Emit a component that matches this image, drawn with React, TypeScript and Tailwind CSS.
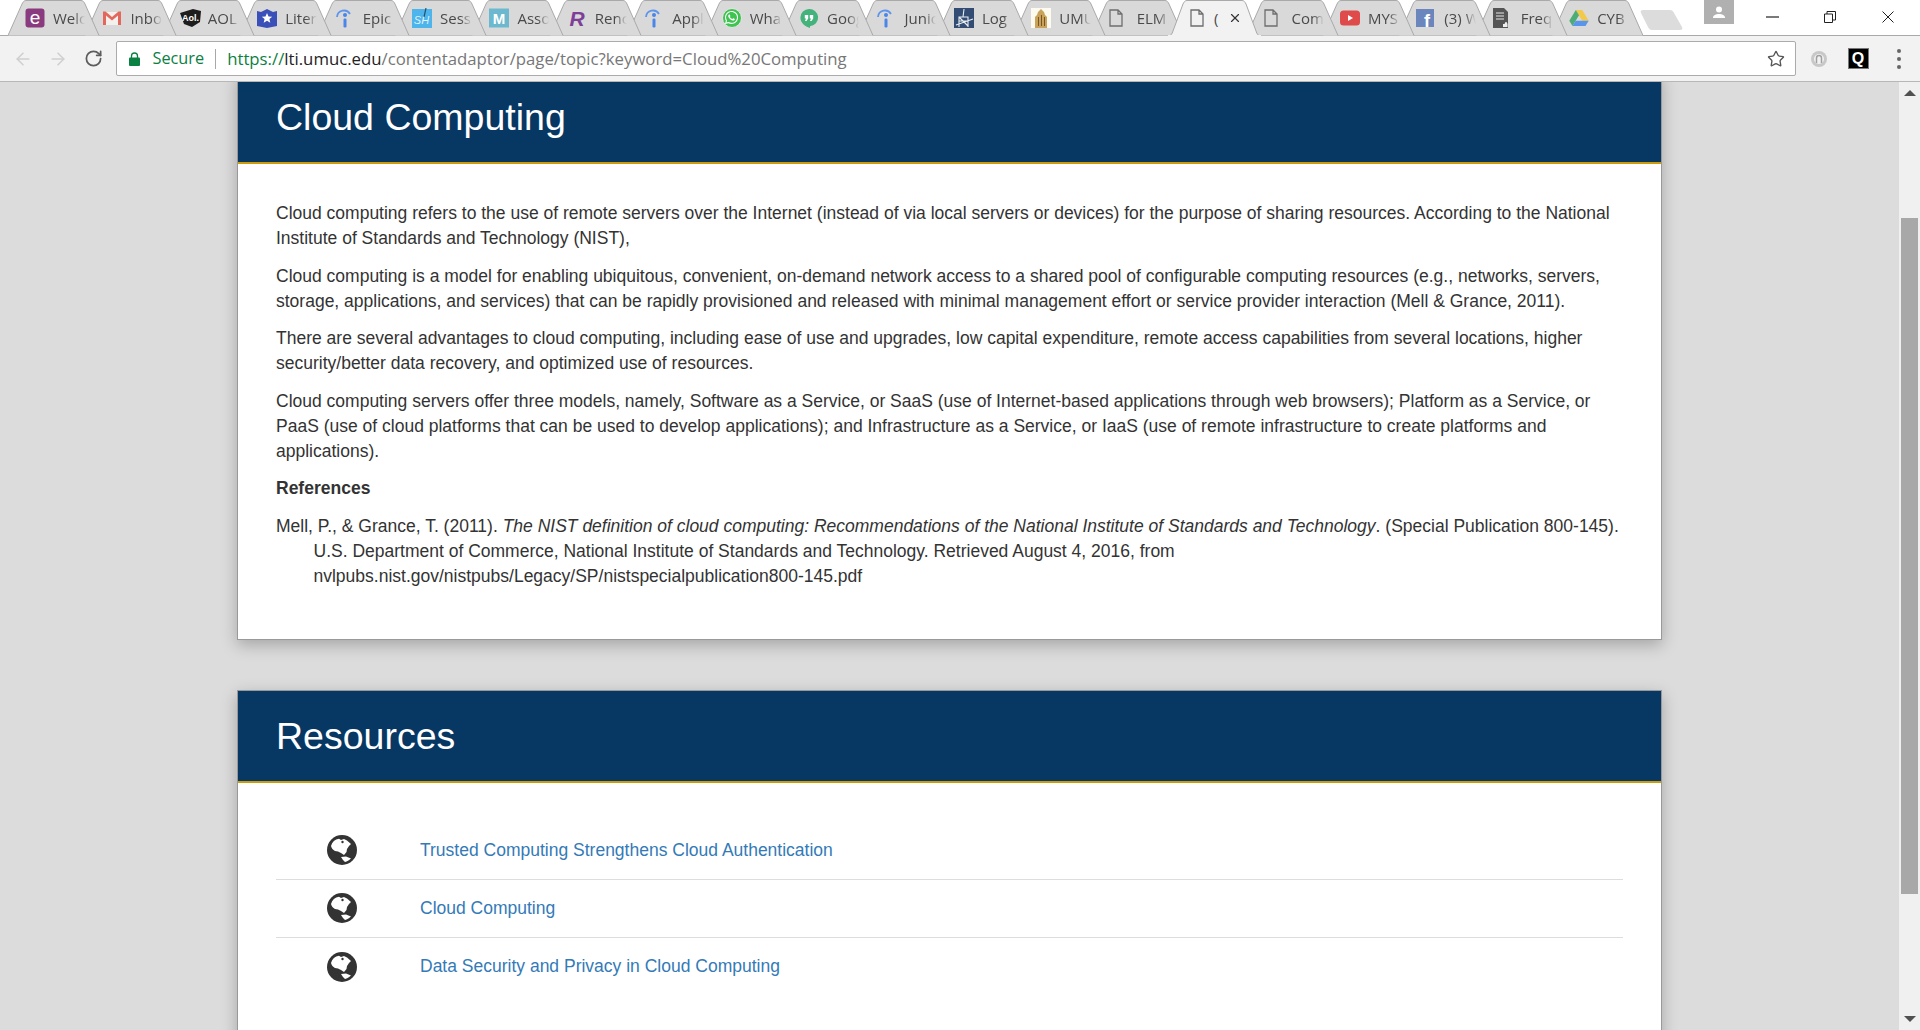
import { ArrowLeft, ArrowRight, RotateCw, Star, X } from "lucide-react";
import { FaWhatsapp } from "react-icons/fa";

const tabs = [
  { icon: "elms", title: "Welcome" },
  { icon: "gmail", title: "Inbox" },
  { icon: "aol", title: "AOL" },
  { icon: "shield", title: "Literature" },
  { icon: "info", title: "Epic" },
  { icon: "sh", title: "Session" },
  { icon: "assoc", title: "Assoc" },
  { icon: "r", title: "Rencontre" },
  { icon: "info", title: "Apply" },
  { icon: "whatsapp", title: "WhatsApp" },
  { icon: "hangouts", title: "Google" },
  { icon: "info", title: "Junior" },
  { icon: "log", title: "Log" },
  { icon: "umuc", title: "UMUC" },
  { icon: "doc", title: "ELM" },
  { icon: "doc", title: "Cloud", active: true },
  { icon: "doc", title: "Comp" },
  { icon: "youtube", title: "MYS", tight: true },
  { icon: "facebook", title: "(3) W", tight: true },
  { icon: "freq", title: "Freq", tight: true },
  { icon: "drive", title: "CYB", tight: true },
];

const resources = [
  "Trusted Computing Strengthens Cloud Authentication",
  "Cloud Computing",
  "Data Security and Privacy in Cloud Computing",
];

function Favicon({ name }: { name: string }) {
  if (name === "elms")
    return (
      <svg width="20" height="20" viewBox="0 0 20 20">
        <rect x="0.5" y="0.5" width="19" height="19" rx="3" fill="#8a3a7e" />
        <text x="10" y="16" textAnchor="middle" fontSize="19" fill="#fff" fontFamily="Liberation Sans">e</text>
      </svg>
    );
  if (name === "gmail")
    return (
      <svg width="20" height="20" viewBox="0 0 20 20">
        <path d="M1 4h18v13H1z" fill="#f4f0ee" />
        <path d="M1 17V3.5h2.5L10 9l6.5-5.5H19V17h-3V7.5L10 12.5 4 7.5V17z" fill="#e2685c" />
      </svg>
    );
  if (name === "aol")
    return (
      <svg width="21" height="20" viewBox="0 0 21 20">
        <path d="M0 5l13-4 8 2-1 11-8 5-8-3z" fill="#1d1d1d" />
        <text x="10.5" y="13" textAnchor="middle" fontSize="9" fontWeight="700" fill="#fff" fontFamily="Liberation Sans">Aol.</text>
      </svg>
    );
  if (name === "shield")
    return (
      <svg width="20" height="20" viewBox="0 0 20 20">
        <path d="M0 3l4 1 6-3 6 3 4-1v15l-10 2-10-2z" fill="#3a50b8" />
        <path d="M10 5l1.5 3.4 3.7.3-2.8 2.4.9 3.6L10 12.8l-3.3 1.9.9-3.6-2.8-2.4 3.7-.3z" fill="#fff" />
      </svg>
    );
  if (name === "info")
    return (
      <svg width="18" height="20" viewBox="0 0 18 20">
        <path d="M2 9a7 7 0 0 1 13-3" fill="none" stroke="#5f94ee" strokeWidth="1.8" />
        <circle cx="10" cy="7" r="2" fill="#4a86e8" />
        <rect x="8.5" y="10.5" width="3" height="9" rx="1.2" fill="#4a86e8" />
      </svg>
    );
  if (name === "sh")
    return (
      <svg width="20" height="20" viewBox="0 0 20 20">
        <rect y="1" width="20" height="19" fill="#4db4ec" />
        <text x="9.5" y="16" textAnchor="middle" fontSize="11" fontStyle="italic" fill="#dff3fc" fontFamily="Liberation Sans">SH</text>
        <path d="M14 0l-2 9" stroke="#27506b" strokeWidth="1.2" />
      </svg>
    );
  if (name === "assoc")
    return (
      <svg width="20" height="20" viewBox="0 0 20 20">
        <rect y="0.5" width="20" height="19" fill="#6cb9cf" />
        <text x="10" y="16" textAnchor="middle" fontSize="15" fontWeight="700" fill="#fff" fontFamily="Liberation Sans">M</text>
      </svg>
    );
  if (name === "r")
    return (
      <svg width="20" height="20" viewBox="0 0 20 20">
        <text x="10" y="18" textAnchor="middle" fontSize="21" fontWeight="700" fontStyle="italic" fill="#7d3f98" fontFamily="Liberation Sans">R</text>
      </svg>
    );
  if (name === "whatsapp")
    return (
      <div className="flex size-5 items-center justify-center rounded-full border border-[#e6e6e6] bg-[#3fc351] text-white">
        <FaWhatsapp size={15} />
      </div>
    );
  if (name === "hangouts")
    return (
      <svg width="20" height="20" viewBox="0 0 20 20">
        <path d="M10 1a8.6 8.6 0 0 1 1 17.2V20c-5-1.500-9.600-5-9.600-10.400A8.600 8.600 0 0 1 10 1z" fill="#44b27b" />
        <path d="M5.800 7h3.400v3.400L7.500 13H6l1-2.600H5.800zM10.800 7h3.400v3.400L12.500 13H11l1-2.600h-1.200z" fill="#fff" />
      </svg>
    );
  if (name === "log")
    return (
      <svg width="20" height="20" viewBox="0 0 20 20">
        <rect width="20" height="20" fill="#334c74" />
        <path d="M5 19V9h9v10M5 13h9M9 9l1-8M2 17l17-6M5 9l9 9" fill="none" stroke="#e8edf3" strokeWidth="1.100" />
      </svg>
    );
  if (name === "umuc")
    return (
      <svg width="20" height="20" viewBox="0 0 20 20">
        <rect width="20" height="20" fill="#fdfaf0" />
        <path d="M4 20V9l2-2 1-3 3-3 3 3 1 3 2 2v11z" fill="#c9a35a" />
        <path d="M7 9h1v9H7zM10 7h1v11h-1zM13 9h1v9h-1z" fill="#76552a" />
      </svg>
    );
  if (name === "doc")
    return (
      <svg width="14" height="18" viewBox="0 0 14 18">
        <path d="M1 1h8l4 4v12H1z M9 1v4h4" fill="none" stroke="#6e6e6e" strokeWidth="1.300" />
      </svg>
    );
  if (name === "youtube")
    return (
      <svg width="20" height="20" viewBox="0 0 20 20">
        <rect y="2.500" width="20" height="15" rx="3.500" fill="#df4a4a" />
        <path d="M8 7l5 3-5 3z" fill="#fff" />
      </svg>
    );
  if (name === "facebook")
    return (
      <svg width="18" height="18" viewBox="0 0 18 18">
        <rect width="18" height="18" fill="#6a86bd" />
        <text x="11" y="18" textAnchor="middle" fontSize="18" fontWeight="700" fill="#fff" fontFamily="Liberation Sans">f</text>
      </svg>
    );
  if (name === "freq")
    return (
      <svg width="16" height="20" viewBox="0 0 16 20">
        <path d="M0 0h11l4 4v16H0z" fill="#555" />
        <path d="M3 5h8M3 8h8M3 11h8" stroke="#e6e6e6" strokeWidth="1.100" />
        <path d="M10 19v-3h1.500l1-2h1l1 2v3z" fill="#eee" />
      </svg>
    );
  return (
    <svg width="20" height="18" viewBox="0 0 20 18">
      <path d="M6.800 1h6.400l6.500 10.800h-6.500z" fill="#f2c94a" />
      <path d="M6.800 1L0.300 11.800 3.500 17l6.500-10.800z" fill="#4cae76" />
      <path d="M3.500 17h13l3.200-5.200H6.700z" fill="#5a95ec" />
    </svg>
  );
}

function Globe() {
  return (
    <svg width="30" height="30" viewBox="0 0 30 30" className="ml-[51px] shrink-0">
      <circle cx="15" cy="15" r="15" fill="#333" />
      <path
        d="M4 11C5 7 8 4.500 12 3.800L14 5l3-1 3 1.500L24 9l-2 2-2 3-.5 3-2.500 3-3-2-3-1.500L8 16c-2-1-3.500-3-4-5z"
        fill="#fff"
      />
      <circle cx="15.500" cy="7" r="1.200" fill="#333" />
      <path d="M14 22l5-.5 5 2c-2 2-4 3-6 3.500l-2-2z" fill="#fff" />
    </svg>
  );
}

function Tab({ icon, title, active, tight, index }: { icon: string; title: string; active?: boolean; tight?: boolean; index: number }) {
  return (
    <div
      className={`relative flex h-[36px] w-[93px] shrink-0 items-center pb-[1px] first:ml-0 ${tight ? "-ml-[16.6px]" : "-ml-[15.6px]"} ${active ? "z-40" : ""}`}
      style={active ? undefined : { zIndex: 30 - index }}
    >
      <svg className="absolute inset-0" width="93" height="36" viewBox="0 0 93 36">
        <path
          d={active ? "M0 36c3 0 4-2 5-5L15 4c1-2 2-3.500 4-3.500h55c2 0 3 1.500 4 3.500l10 27c1 3 2 5 5 5z" : "M1 35.500L15 4c1-2 2-3.500 4-3.500h55c2 0 3 1.500 4 3.500l14 31.500"}
          fill={active ? "#f2f2f2" : "#d9d9d9"}
          stroke="#a9a9a9"
        />
        {active && <path d="M0 36h93" stroke="#f2f2f2" strokeWidth="2" />}
      </svg>
      <div className="relative flex h-[35px] w-full items-center pl-[18px]">
        <div className={`flex shrink-0 items-center justify-start ${active ? "ml-[4px] w-[24px]" : "w-[28px]"}`}>
          <Favicon name={icon} />
        </div>
        <div
          className={`overflow-hidden whitespace-nowrap text-[15px] leading-5 text-[#4a4a4a] [font-family:'Open_Sans',sans-serif] ${active ? "w-[7px]" : "w-[32px] [mask-image:linear-gradient(to_right,black_65%,transparent)]"}`}
        >
          {active ? "(" : title}
        </div>
        {active && <X size={14} strokeWidth={2} className="ml-[7px] text-[#333]" />}
      </div>
    </div>
  );
}

function TabStrip() {
  return (
    <div className="flex h-[36px] shrink-0 items-start border-b border-[#a9a9a9] bg-white pl-[7px]">
      <div className="isolate flex h-[36px]">
        {tabs.map((t, i) => (
          <Tab key={t.title} icon={t.icon} title={t.title} active={t.active} tight={t.tight} index={i} />
        ))}
      </div>
      <svg className="-ml-[4px] mt-[9px] shrink-0" width="43" height="22" viewBox="0 0 43 22">
        <path d="M3 1h27c2 0 3 1 4 3l8 14c1 2 0 3-2 3H12c-2 0-3-1-4-3L1 4C0 2 1 1 3 1z" fill="#dcdcdc" />
      </svg>
      <div className="ml-[21px] flex h-[24px] w-[30px] shrink-0 items-center justify-center bg-[#b0b0b0]">
        <svg width="12" height="13" viewBox="0 0 12 13">
          <circle cx="6" cy="3.500" r="3" fill="#fff" />
          <path d="M0 12c0-3 3-4 6-4s6 1 6 4z" fill="#fff" />
        </svg>
      </div>
      <div className="ml-[31px] mt-[11px] flex w-[129px] shrink-0 items-start justify-between">
        <svg width="15" height="12" viewBox="0 0 15 12">
          <path d="M1 6h13" stroke="#222" strokeWidth="1.200" />
        </svg>
        <svg width="12" height="12" viewBox="0 0 12 12" className="-ml-[3px]">
          <path d="M.5 3h8v8.500h-8zM3 3V.5h8.500V9H8.500" fill="none" stroke="#222" />
        </svg>
        <svg width="12" height="12" viewBox="0 0 12 12">
          <path d="M.5.500l11 11M11.500.500l-11 11" stroke="#222" />
        </svg>
      </div>
    </div>
  );
}

function Toolbar() {
  return (
    <div className="flex h-[46px] shrink-0 items-center border-b border-[#b7b7b7] bg-[#f2f2f2]">
      <ArrowLeft size={20} strokeWidth={1.800} className="ml-[13px] text-[#cfcfcf]" />
      <ArrowRight size={20} strokeWidth={1.800} className="ml-[15px] text-[#cfcfcf]" />
      <RotateCw size={19} strokeWidth={2.200} className="ml-[16px] text-[#5c5c5c]" />
      <div className="ml-[12.5px] flex h-[35px] w-[1680px] items-center rounded-[2px] border border-[#ababab] bg-white pl-[12px] pr-[10px] whitespace-nowrap [font-family:'Open_Sans',sans-serif]">
        <svg width="11" height="14" viewBox="0 0 11 14" className="shrink-0">
          <path d="M2.500 6V4a3 3 0 0 1 6 0v2" fill="none" stroke="#0b8043" strokeWidth="1.300" />
          <rect y="5.500" width="11" height="8.500" rx="1" fill="#0b8043" />
        </svg>
        <span className="ml-[13px] text-[16.3px] text-[#0b8043]">Secure</span>
        <span className="ml-[11px] h-[20px] w-px bg-[#a8a8a8]" />
        <span className="ml-[11px] text-[16.75px]">
          <span className="text-[#0b8043]">https://</span>
          <span className="text-[#222]">lti.umuc.edu</span>
          <span className="text-[#777]">/contentadaptor/page/topic?keyword=Cloud%20Computing</span>
        </span>
        <Star size={18} strokeWidth={1.800} className="ml-auto text-[#555]" />
      </div>
      <svg width="18" height="18" viewBox="0 0 18 18" className="ml-[14px]">
        <circle cx="9" cy="9" r="8" fill="#c8c8c8" />
        <circle cx="9" cy="9" r="5" fill="#f2f2f2" />
        <path d="M6.500 13V8a2.500 2.500 0 0 1 5 0v5" fill="none" stroke="#a0a0a0" strokeWidth="1.500" />
      </svg>
      <div className="ml-[20px] flex h-[21px] w-[21px] items-center justify-center border border-[#777] bg-black text-[16px] font-bold text-white [font-family:'Liberation_Sans',sans-serif]">
        Q
      </div>
      <div className="ml-[28px] flex flex-col gap-[4px]">
        <span className="size-[4px] rounded-full bg-[#666]" />
        <span className="size-[4px] rounded-full bg-[#666]" />
        <span className="size-[4px] rounded-full bg-[#666]" />
      </div>
    </div>
  );
}

function CardHeader({ title }: { title: string }) {
  return (
    <div className="border-b-[2px] border-[#cc9c0a] bg-[#073763] px-[38px] pb-[24px] pt-[25px] text-[37.5px] font-normal leading-[41px] text-white">
      {title}
    </div>
  );
}

function Scrollbar() {
  return (
    <div className="flex w-[21px] shrink-0 flex-col items-center bg-[#f0f0f0]">
      <div className="mt-[8px] size-0 border-x-[6px] border-b-[6px] border-x-transparent border-b-[#505050]" />
      <div className="mt-[122px] h-[676px] w-[17px] bg-[#a8a8a8]" />
      <div className="mt-auto mb-[8px] size-0 border-x-[6px] border-t-[6px] border-x-transparent border-t-[#505050]" />
    </div>
  );
}

export default function App() {
  return (
    <div className="flex h-screen flex-col overflow-hidden bg-white">
      <TabStrip />
      <Toolbar />
      <div className="flex min-h-0 flex-1">
        <main className="min-w-0 flex-1 overflow-hidden bg-[#dcdcdc] text-[17.5px] leading-[25px] text-[#333] [font-family:'Liberation_Sans',sans-serif]">
          <section className="-mt-[10px] ml-[237px] w-[1425px] border-x border-b border-[#999] bg-white shadow-[0_5px_15px_rgba(0,0,0,0.25)]">
            <CardHeader title="Cloud Computing" />
            <div className="px-[38px] pb-[38px] pt-[37px]">
              <p className="mb-[12.5px]">
                Cloud computing refers to the use of remote servers over the Internet (instead of via local servers or devices) for the purpose of sharing resources. According to the National Institute of Standards and Technology (NIST),
              </p>
              <p className="mb-[12.5px]">
                Cloud computing is a model for enabling ubiquitous, convenient, on-demand network access to a shared pool of configurable computing resources (e.g., networks, servers, storage, applications, and services) that can be rapidly provisioned and released with minimal management effort or service provider interaction (Mell &amp; Grance, 2011).
              </p>
              <p className="mb-[12.5px]">
                There are several advantages to cloud computing, including ease of use and upgrades, low capital expenditure, remote access capabilities from several locations, higher security/better data recovery, and optimized use of resources.
              </p>
              <p className="mb-[12.5px]">
                Cloud computing servers offer three models, namely, Software as a Service, or SaaS (use of Internet-based applications through web browsers); Platform as a Service, or PaaS (use of cloud platforms that can be used to develop applications); and Infrastructure as a Service, or IaaS (use of remote infrastructure to create platforms and applications).
              </p>
              <p className="mb-[12.5px] font-bold">References</p>
              <p className="mb-[12.5px] pl-[37.5px] -indent-[37.5px]">
                Mell, P., &amp; Grance, T. (2011). <i>The NIST definition of cloud computing: Recommendations of the National Institute of Standards and Technology</i>. (Special Publication 800-145). U.S. Department of Commerce, National Institute of Standards and Technology. Retrieved August 4, 2016, from nvlpubs.nist.gov/nistpubs/Legacy/SP/nistspecialpublication800-145.pdf
              </p>
            </div>
          </section>
          <section className="mt-[50px] ml-[237px] w-[1425px] border border-[#999] bg-white shadow-[0_5px_15px_rgba(0,0,0,0.25)]">
            <CardHeader title="Resources" />
            <ul className="px-[38px] pb-[60px] pt-[38.5px]">
              {resources.map((r) => (
                <li key={r} className="flex h-[58px] items-center border-b border-[#ddd] last:border-b-0">
                  <Globe />
                  <a href="#" className="ml-[63px] text-[#337ab7]">{r}</a>
                </li>
              ))}
            </ul>
          </section>
        </main>
        <Scrollbar />
      </div>
    </div>
  );
}
